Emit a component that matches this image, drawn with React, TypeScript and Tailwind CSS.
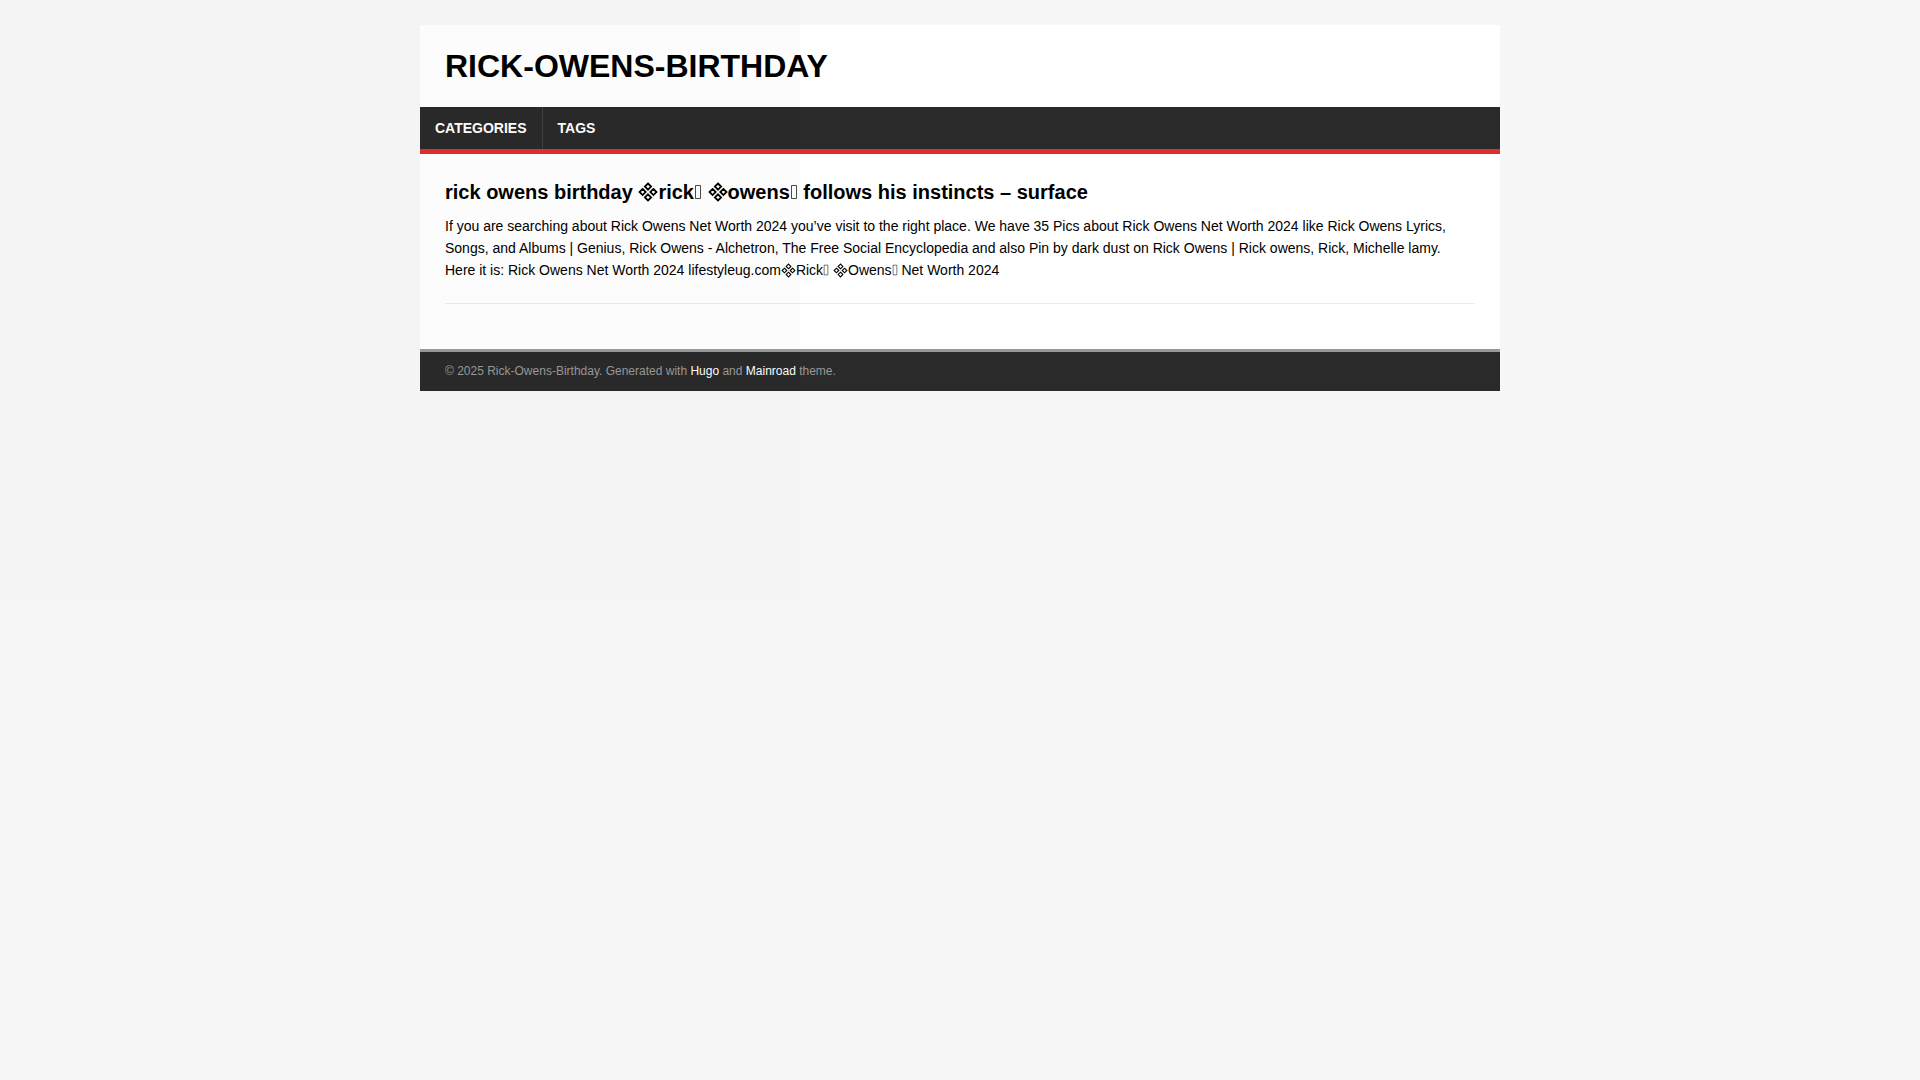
// four small diamonds set in a diamond
function Quad({ className }: { className: string }) {
  return (
    <svg className={className} viewBox="0 0 20 20" fill="none" stroke="currentColor" aria-hidden="true">
      <path d="M10 1.5l3.1 3.1-3.1 3.1-3.1-3.1zM10 12.3l3.1 3.1-3.1 3.1-3.1-3.1zM4.6 6.9l3.1 3.1-3.1 3.1-3.1-3.1zM15.4 6.9l3.1 3.1-3.1 3.1-3.1-3.1z" />
    </svg>
  )
}

function Box({ className }: { className: string }) {
  return (
    <svg className={className} viewBox="0 0 8 16" fill="none" stroke="currentColor" strokeWidth="0.7" aria-hidden="true">
      <path d="M1.5 1.5h5v13h-5z" />
    </svg>
  )
}

const menu = ['Categories', 'Tags']

const quadLg = 'inline-block h-5 w-5 align-[-3px] stroke-[1.8]'
const quadSm = 'inline-block h-[15px] w-[15px] align-[-3px] stroke-[1.5]'
const boxLg = 'inline-block h-4 w-2 align-[-1px]'
const boxSm = 'inline-block h-3 w-[6px] align-[-1px]'

export default function App() {
  return (
    <div className="min-h-screen bg-[#f7f7f7] pt-[25px] font-['Liberation_Sans',Arial,sans-serif] text-[14px] leading-[22px] text-black">
      <div className="mx-auto max-w-[1080px] bg-white">
        <header className="p-[25px]">
          <a href="#" className="block text-[32px] leading-8 font-bold uppercase">
            Rick-Owens-Birthday
          </a>
        </header>

        <nav className="border-b-[5px] border-[#e22d30] bg-[#2a2a2a]">
          <ul className="flex">
            {menu.map((item) => (
              <li key={item} className="border-l border-[#404040] first:border-l-0">
                <a href="#" className="block px-[15px] py-[10px] font-bold text-white uppercase">
                  {item}
                </a>
              </li>
            ))}
          </ul>
        </nav>

        <main className="px-[25px] pt-[25px] pb-[45px]">
          <h1 className="mb-[10px] text-[20px] leading-[26px] font-bold">
            rick owens birthday <Quad className={quadLg} />
            rick
            <Box className={boxLg} /> <Quad className={quadLg} />
            owens
            <Box className={boxLg} /> follows his instincts – surface
          </h1>
          <p>
            If you are searching about Rick Owens Net Worth 2024 you’ve visit to the right place. We have 35 Pics about
            Rick Owens Net Worth 2024 like Rick Owens Lyrics, Songs, and Albums | Genius, Rick Owens - Alchetron, The
            Free Social Encyclopedia and also Pin by dark dust on Rick Owens | Rick owens, Rick, Michelle lamy.{' '}
            <span className="inline-block">
              Here it is: Rick Owens Net Worth 2024 lifestyleug.com
              <Quad className={quadSm} />
              Rick
              <Box className={boxSm} /> <Quad className={quadSm} />
              Owens
              <Box className={boxSm} /> Net Worth 2024
            </span>
          </p>
          <hr className="mt-[22px] border-[#ebebeb]" />
        </main>

        <footer className="border-t-[3px] border-[#999] bg-[#2a2a2a] px-[25px] py-[10px] text-[12px] leading-[19px] text-[#999]">
          © 2025 Rick-Owens-Birthday. Generated with{' '}
          <a href="#" className="text-white">
            Hugo
          </a>{' '}
          and{' '}
          <a href="#" className="text-white">
            Mainroad
          </a>{' '}
          theme.
        </footer>
      </div>
      <div className="pointer-events-none fixed top-0 left-0 h-[600px] w-[800px] bg-black/[0.012]" />
    </div>
  )
}
